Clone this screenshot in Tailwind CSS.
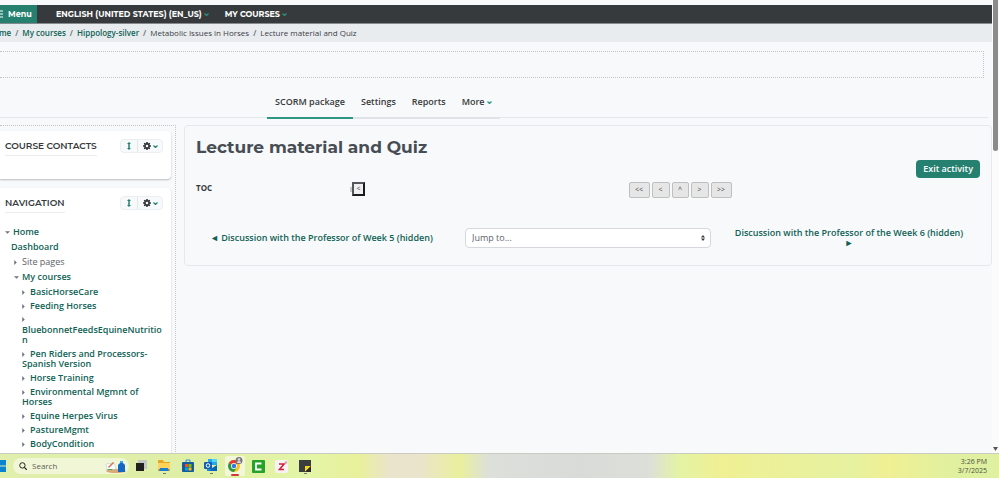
<!DOCTYPE html>
<html lang="en">
<head>
    <meta charset="UTF-8">
    <meta name="viewport" content="width=device-width, initial-scale=1.0">
    <title>Lecture material and Quiz</title>
    <script src="https://cdn.jsdelivr.net/npm/@tailwindcss/browser@4"></script>
</head>
<body class="h-screen overflow-hidden flex flex-col bg-[#f8f9fb] font-['Open_Sans','Noto_Sans',sans-serif] text-[9px] leading-[10px] text-[#373a3c]">
    <svg class="hidden">
        <symbol id="chevron" viewBox="0 0 10 6"><path d="M1 1l4 4 4-4" fill="none" stroke="currentColor" stroke-width="2.500"/></symbol>
        <symbol id="updown" viewBox="0 0 8 16"><path d="M4 0l4 4H5.500v8H8l-4 4-4-4h2.500V4H0z" fill="currentColor"/></symbol>
        <symbol id="gear" viewBox="0 0 16 16">
            <path fill="currentColor" fill-rule="evenodd" d="M6.500 0h3l.5 2.200 1.300.5L13 1.500 14.500 3l-1.200 2 .5 1.300 2.200.2v3l-2.200.2-.5 1.300 1.200 2L13 14.500l-2-1.200-1.300.5-.2 2.200h-3l-.2-2.200-1.300-.5-2 1.200L1.500 13l1.200-2-.5-1.300L0 9.500v-3l2.200-.2L2.700 5 1.500 3 3 1.500l2 1.200 1.300-.5zM8 5.500a2.500 2.500 0 100 5 2.500 2.500 0 000-5z"/>
        </symbol>
        <symbol id="right" viewBox="0 0 4 8"><path d="M0 0l4 4-4 4z" fill="currentColor"/></symbol>
        <symbol id="down" viewBox="0 0 8 4"><path d="M0 0h8L4 4z" fill="currentColor"/></symbol>
    </svg>

    <div class="flex-1 min-h-0 flex">
        <div class="flex-1 min-w-0 overflow-hidden pt-[5px]">
            <!-- top bar -->
            <header class="flex items-center h-[19px] bg-[#373a3c] text-white font-[Montserrat,Inter,sans-serif] font-bold text-[8px] border-b border-[#868a8d]">
                <button class="flex items-center gap-1 h-full w-[37px] bg-[#25806f]">
                    <svg class="w-1 h-2 shrink-0" viewBox="0 0 4 8"><path d="M0 1h3M0 4h3M0 7h3" stroke="white"/></svg>
                    Menu
                </button>
                <nav class="flex gap-4 pl-[19px]">
                    <a href="#" class="flex items-center gap-[2px]">ENGLISH (UNITED STATES) (EN_US)<svg class="w-[5px] h-[3px] text-[#2a9080]"><use href="#chevron"/></svg></a>
                    <a href="#" class="flex items-center gap-[2px]">MY COURSES<svg class="w-[5px] h-[3px] text-[#2a9080]"><use href="#chevron"/></svg></a>
                </nav>
            </header>
            <nav aria-label="Breadcrumb" class="h-[18px] bg-[#e9ecef] overflow-hidden">
                <ol class="flex items-center h-full gap-1 -ml-3 font-semibold text-[8px] whitespace-nowrap text-[#0f6255]">
                    <li><a href="#">Home</a></li>
                    <li class="text-[#60656a]">/</li>
                    <li><a href="#">My courses</a></li>
                    <li class="text-[#60656a]">/</li>
                    <li><a href="#">Hippology-silver</a></li>
                    <li class="text-[#60656a]">/</li>
                    <li class="font-normal text-[#3c4146]">Metabolic Issues in Horses</li>
                    <li class="text-[#60656a]">/</li>
                    <li class="font-normal text-[#3c4146]">Lecture material and Quiz</li>
                </ol>
            </nav>

            <div class="mt-[9px] mr-2 h-[27px] border border-l-0 border-dotted border-[#c3c6c9]"></div>

            <!-- activity tabs -->
            <nav class="flex mt-[9px] mr-1 pl-[267px] h-[31px] border-b border-[#e4e7ea] font-semibold">
                <a href="#" class="px-2 pt-[10px] h-8 border-b-2 border-[#2f9684]">SCORM package</a>
                <a href="#" class="px-2 pt-[10px] h-8 border-b-2 border-[#dfe2e8]">Settings</a>
                <a href="#" class="px-2 pt-[10px] h-8 border-b-2 border-[#dfe2e8]">Reports</a>
                <a href="#" class="px-2 pt-[10px] h-8 border-b-2 border-[#dfe2e8]">More<svg class="inline ml-[2px] w-[5px] h-[3px] text-[#2f9684]"><use href="#chevron"/></svg></a>
            </nav>

            <div class="flex gap-2 mt-[7px]">
                <!-- blocks -->
                <aside class="w-44 shrink-0 pr-1 pt-[5px] border-t border-r border-dotted border-[#c3c6c9]">
                    <section class="h-12 bg-white rounded-r-sm shadow-[0_1px_2px_rgba(0,0,0,0.25)] pl-[5px] pr-2 pt-2">
                        <div class="flex items-start justify-between">
                            <h2 class="pt-[2px] pb-1 border-b border-[#e9ecef] font-[Montserrat,Inter,sans-serif] font-semibold text-[9px]">COURSE CONTACTS</h2>
                            <div class="flex h-[14px] rounded-sm border border-[#eceff1] bg-[#f8f9fb]">
                                <button aria-label="Move block" class="flex items-center justify-center w-[17px] border-r border-[#e4e7ea]"><svg class="w-1 h-2 text-[#25806f]"><use href="#updown"/></svg></button>
                                <button aria-label="Actions" class="flex items-center justify-center gap-[2px] w-6"><svg class="w-2 h-2"><use href="#gear"/></svg><svg class="w-[5px] h-[3px] text-[#25806f]"><use href="#chevron"/></svg></button>
                            </div>
                        </div>
                    </section>
                    <section class="mt-[9px] h-[300px] bg-white rounded-r-sm shadow-[0_1px_2px_rgba(0,0,0,0.2)] pl-[5px] pr-2 pt-2">
                        <div class="flex items-start justify-between">
                            <h2 class="pt-[2px] pb-1 border-b border-[#e9ecef] font-[Montserrat,Inter,sans-serif] font-semibold text-[9px]">NAVIGATION</h2>
                            <div class="flex h-[14px] rounded-sm border border-[#eceff1] bg-[#f8f9fb]">
                                <button aria-label="Move block" class="flex items-center justify-center w-[17px] border-r border-[#e4e7ea]"><svg class="w-1 h-2 text-[#25806f]"><use href="#updown"/></svg></button>
                                <button aria-label="Actions" class="flex items-center justify-center gap-[2px] w-6"><svg class="w-2 h-2"><use href="#gear"/></svg><svg class="w-[5px] h-[3px] text-[#25806f]"><use href="#chevron"/></svg></button>
                            </div>
                        </div>
                        <ul class="flex flex-col gap-[5px] mt-[14px] font-semibold text-[#0f6255]">
                            <li><svg class="inline w-[5px] h-[3px] mr-[3px] text-[#6f7579]"><use href="#down"/></svg><a href="#">Home</a></li>
                            <li class="pl-[6px]"><a href="#">Dashboard</a></li>
                            <li class="pl-[9px] font-normal text-[#5b6166]"><svg class="inline w-[3px] h-[5px] mr-[5px] text-[#6f7579]"><use href="#right"/></svg>Site pages</li>
                            <li class="pl-[9px]"><svg class="inline w-[5px] h-[3px] mr-[3px] text-[#6f7579]"><use href="#down"/></svg><a href="#">My courses</a></li>
                            <li class="pl-[17px]">
                                <ul class="flex flex-col gap-1">
                                    <li><svg class="inline w-[3px] h-[5px] mr-[5px] text-[#6f7579]"><use href="#right"/></svg><a href="#">BasicHorseCare</a></li>
                                    <li><svg class="inline w-[3px] h-[5px] mr-[5px] text-[#6f7579]"><use href="#right"/></svg><a href="#">Feeding Horses</a></li>
                                    <li><svg class="block w-[3px] h-[5px] mt-[2px] mb-[3px] text-[#6f7579]"><use href="#right"/></svg><a href="#" class="block break-all">BluebonnetFeedsEquineNutrition</a></li>
                                    <li><svg class="inline w-[3px] h-[5px] mr-[5px] text-[#6f7579]"><use href="#right"/></svg><a href="#">Pen Riders and Processors-Spanish Version</a></li>
                                    <li><svg class="inline w-[3px] h-[5px] mr-[5px] text-[#6f7579]"><use href="#right"/></svg><a href="#">Horse Training</a></li>
                                    <li><svg class="inline w-[3px] h-[5px] mr-[5px] text-[#6f7579]"><use href="#right"/></svg><a href="#">Environmental Mgmnt of Horses</a></li>
                                    <li><svg class="inline w-[3px] h-[5px] mr-[5px] text-[#6f7579]"><use href="#right"/></svg><a href="#">Equine Herpes Virus</a></li>
                                    <li><svg class="inline w-[3px] h-[5px] mr-[5px] text-[#6f7579]"><use href="#right"/></svg><a href="#">PastureMgmt</a></li>
                                    <li><svg class="inline w-[3px] h-[5px] mr-[5px] text-[#6f7579]"><use href="#right"/></svg><a href="#">BodyCondition</a></li>
                                </ul>
                            </li>
                        </ul>
                    </section>
                </aside>

                <!-- activity -->
                <main class="flex-1 self-start h-[141px] border border-[#e6e9ec] rounded px-[11px] pt-[11px]">
                    <h1 class="font-[Montserrat,Inter,sans-serif] font-bold text-[17px] leading-5 text-[#474d54]">Lecture material and Quiz</h1>
                    <div class="flex justify-end mt-[3px]">
                        <button class="h-[18px] px-[7px] rounded-sm bg-[#25806f] text-white font-semibold">Exit activity</button>
                    </div>
                    <div class="flex mt-1">
                        <div class="flex w-[169px] justify-between">
                            <span class="pt-[1px] font-bold text-[8px]">TOC</span>
                            <div class="flex items-center h-[14px]">
                                <span class="w-[2px] h-[5px] bg-[#c9cbcd]"></span>
                                <button class="w-[13px] h-[14px] border-2 border-[#1b1b1b] border-t-[#55585a] border-l-[#55585a] bg-[#f0f0f0] text-[7px] leading-[8px]">&lt;</button>
                            </div>
                        </div>
                        <div class="flex flex-1 justify-center gap-[2px] pl-[15px] text-[7px] text-[#444]">
                            <button class="w-[21px] h-4 rounded-xs border border-[#bfbfbf] bg-[#e6e6e6]">&lt;&lt;</button>
                            <button class="w-[18px] h-4 rounded-xs border border-[#bfbfbf] bg-[#e6e6e6]">&lt;</button>
                            <button class="w-[17px] h-4 rounded-xs border border-[#bfbfbf] bg-[#e6e6e6]">^</button>
                            <button class="w-[18px] h-4 rounded-xs border border-[#bfbfbf] bg-[#e6e6e6]">&gt;</button>
                            <button class="w-[21px] h-4 rounded-xs border border-[#bfbfbf] bg-[#e6e6e6]">&gt;&gt;</button>
                        </div>
                    </div>
                    <div class="grid grid-cols-3 items-center mt-[30px] gap-[15px] px-2 font-semibold text-[#0f6255]">
                        <a href="#" class="pl-[6px] whitespace-nowrap">◄ Discussion with the Professor of Week 5 (hidden)</a>
                        <div class="relative">
                            <select aria-label="Jump to..." class="block appearance-none w-full h-5 px-[6px] rounded-sm border border-[#d5d9dd] bg-white font-normal leading-[18px] text-[#60656a]">
                                <option>Jump to...</option>
                            </select>
                            <svg class="absolute right-[6px] top-[7px] w-1 h-[6px]" viewBox="0 0 4 6"><path d="M0 2.500L2 0l2 2.500zM0 3.500L2 6l2-2.500z" fill="#343a40"/></svg>
                        </div>
                        <a href="#" class="px-1 text-center">Discussion with the Professor of the Week 6 (hidden) ►</a>
                    </div>
                </main>
            </div>
        </div>

        <!-- scrollbar -->
        <div class="w-[7px] shrink-0 flex flex-col items-center justify-between bg-[#fbfbfc] pb-[2px]">
            <div class="w-[5px] h-[151px] rounded-b bg-[#8b8b8b]"></div>
            <svg class="w-[5px] h-1" viewBox="0 0 5 4"><path d="M0 0h5L2.500 4z" fill="#555"/></svg>
        </div>
    </div>

    <!-- taskbar -->
    <footer class="h-[25px] shrink-0 flex items-center border-t border-[#c9ccc0] bg-[linear-gradient(to_right,#e0efac_0%,#e0efa6_20%,#e3f5a6_31%,#e9f09c_36%,#ebe4cc_39%,#ebe4cc_42%,#e9f09c_46%,#dddfdb_49%,#d9dbd8_58%,#dcdfd9_65%,#e4f3a4_68%,#f0f094_72%,#e6f2a0_85%,#f0f094_89%,#dff0a0_96%)] text-[8px] text-[#4c5340]">
        <svg class="w-[6px] h-3" viewBox="0 0 6 12"><path d="M0 0h6v5.500H0zM0 6.500h6V12H0z" fill="#0a84d0"/></svg>
        <label class="flex items-center ml-[7px] pl-[6px] pr-[2px] w-[116px] h-4 rounded-full bg-[#f1f7d6]">
            <svg class="w-2 h-2 shrink-0" viewBox="0 0 8 8"><circle cx="3.400" cy="3.400" r="2.700" fill="none" stroke="#222"/><path d="M5.400 5.400L8 8" stroke="#222" stroke-width="1.200"/></svg>
            <input type="text" placeholder="Search" aria-label="Search" class="flex-1 min-w-0 pl-[5px] bg-transparent placeholder:text-[#5c6157]">
            <svg class="w-6 h-[13px] shrink-0" viewBox="0 0 24 13"><ellipse cx="13" cy="11" rx="10" ry="2" fill="#d9a877"/><path d="M3 4l8-1 2 6-9 1z" fill="#fff" stroke="#b4c0c6" stroke-width=".5"/><path d="M5 7l5-5 1 1-5 5z" fill="#d4704d"/><path d="M5 9l4 0 1 1H4z" fill="#58a35a"/><path d="M15 12V5l2-2V1h3v2l2 2v7z" fill="#1567c5"/><path d="M17 1h3v2h-3z" fill="#2fa5ea"/></svg>
        </label>
        <div class="flex items-center">
            <button aria-label="Task view" class="w-[23px] h-6 flex items-center justify-center"><svg class="w-3 h-3" viewBox="0 0 12 12"><path d="M3 0h9v9H3z" fill="#c4c6c4"/><path d="M1 3h8v8H1z" fill="#202020"/></svg></button>
            <button aria-label="File Explorer" class="w-6 h-6 flex items-center justify-center"><svg class="w-[14px] h-[18px]" viewBox="0 0 14 18"><path d="M1 3h5l1 2h6v9H1z" fill="#e9a823"/><path d="M1 6h12v6H1z" fill="#ffd35a"/><path d="M3 11h8l1 3H2z" fill="#1b7fd1"/><path d="M6 16h3v1H6z" fill="#777"/></svg></button>
            <button aria-label="Microsoft Store" class="w-[23px] h-6 flex items-center justify-center"><svg class="w-[14px] h-[14px]" viewBox="0 0 14 14"><path d="M5 4V1h4v3" fill="none" stroke="#2a90d8"/><rect x="1" y="3" width="12" height="10" rx="1" fill="#155a9e"/><path d="M4 5h3v3H4z" fill="#f25022"/><path d="M7.500 5h3v3h-3z" fill="#7fba00"/><path d="M4 8.500h3v3H4z" fill="#00a4ef"/><path d="M7.500 8.500h3v3h-3z" fill="#ffb900"/></svg></button>
            <button aria-label="Outlook" class="w-6 h-6 flex items-center justify-center"><svg class="w-[14px] h-[18px]" viewBox="0 0 14 18"><path d="M4 2h9v6H4z" fill="#28a8ea"/><path d="M8 2h5v3H8z" fill="#50d9ff"/><path d="M3 8l5 3 5-3v6H3z" fill="#1490df"/><path d="M13 8v6H5z" fill="#0a64b4"/><rect x="0" y="5" width="8" height="7" rx="1" fill="#0f5fb3"/><circle cx="4" cy="8.500" r="1.800" fill="none" stroke="#fff"/><path d="M6 16h3v1H6z" fill="#777"/></svg></button>
            <button aria-label="Google Chrome" class="w-6 h-6 flex items-center justify-center"><svg class="w-[20px] h-[22px]" viewBox="0 0 20 22"><rect x="0" y="1" width="20" height="20" rx="2" fill="#f3f7da"/><circle cx="9" cy="11" r="6" fill="#fbc116"/><path d="M9 11L3.800 8A6 6 0 0114.200 8z" fill="#e33b2e"/><path d="M9 11L3.800 8A6 6 0 009 17l2.600-4.500z" fill="#2a9a48"/><circle cx="9" cy="11" r="2.900" fill="#fff"/><circle cx="9" cy="11" r="2.200" fill="#2f78e4"/><circle cx="14" cy="5.500" r="3.500" fill="#777"/><circle cx="14" cy="4.500" r="1.300" fill="#e1ddda"/><path d="M12 8a2 2 0 014 0z" fill="#ddd"/><rect x="6" y="19" width="8" height="2" rx="1" fill="#d23b33"/></svg></button>
            <button aria-label="Camtasia" class="w-[22px] h-6 flex items-center justify-center"><svg class="w-[13px] h-[13px]" viewBox="0 0 13 13"><rect width="13" height="13" rx="1" fill="#25a229"/><path d="M9.500 3.500H4v6h5.500" fill="none" stroke="#fff" stroke-width="1.800"/></svg></button>
            <button aria-label="Zotero" class="w-6 h-6 flex items-center justify-center"><svg class="w-[13px] h-[13px]" viewBox="0 0 13 13"><rect width="13" height="13" rx="2" fill="#f7f3f5"/><path d="M4 4h5L4.500 9.500H9" fill="none" stroke="#d3203c" stroke-width="1.600"/><circle cx="11" cy="2.500" r="1.300" fill="#d9a0a0"/></svg></button>
            <button aria-label="Sticky Notes" class="w-6 h-6 flex items-center justify-center"><svg class="w-3 h-[18px]" viewBox="0 0 12 18"><path d="M0 3h12v12H0z" fill="#3c3d3f"/><path d="M6 9h6l-6 6z" fill="#f7d51d"/><path d="M12 9v6H6z" fill="#2b2b2b"/><path d="M5 16h3v1H5z" fill="#777"/></svg></button>
        </div>
        <div class="ml-auto mr-3 text-right text-[7px] leading-[9px]">3:26 PM<br>3/7/2025</div>
    </footer>
</body>
</html>
